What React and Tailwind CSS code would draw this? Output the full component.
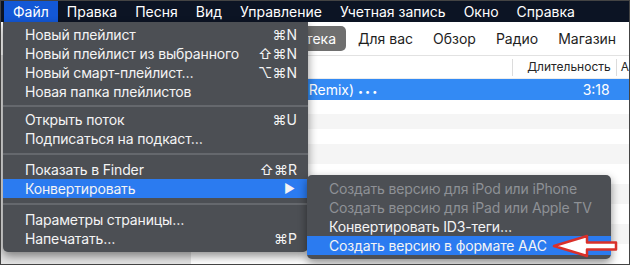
import React from 'react';

const menuBar = ['Файл', 'Правка', 'Песня', 'Вид', 'Управление', 'Учетная запись', 'Окно', 'Справка'];

const fileMenu = [
  { label: 'Новый плейлист', keys: '⌘N' },
  { label: 'Новый плейлист из выбранного', keys: '⇧⌘N' },
  { label: 'Новый смарт-плейлист…', keys: '⌥⌘N' },
  { label: 'Новая папка плейлистов' },
  { sep: 'h-[9px]' },
  { label: 'Открыть поток', keys: '⌘U' },
  { label: 'Подписаться на подкаст…' },
  { sep: 'h-[12px]' },
  { label: 'Показать в Finder', keys: '⇧⌘R' },
  { label: 'Конвертировать', arrow: true, active: true },
  { sep: 'h-[12px]' },
  { label: 'Параметры страницы…' },
  { label: 'Напечатать…', keys: '⌘P' },
];

const convertMenu = [
  { label: 'Создать версию для iPod или iPhone', disabled: true },
  { label: 'Создать версию для iPad или Apple TV', disabled: true },
  { label: 'Конвертировать ID3-теги…' },
  { label: 'Создать версию в формате AAC', active: true },
];

const MenuRow = ({ item }) => {
  if (item.sep) {
    return (
      <div className={`${item.sep} flex items-center`}>
        <div className="h-[2px] w-full bg-[#65686d]" />
      </div>
    );
  }
  return (
    <div
      className={`h-[19px] flex items-center pl-[22px] pr-[11px] ${item.active ? 'bg-[#2b7bf0]' : ''} ${item.disabled ? 'text-[#8e9196]' : 'text-[#f4f4f4]'}`}
    >
      <span className="flex-1 whitespace-nowrap tracking-[-0.15px]">{item.label}</span>
      {item.keys && <span className="whitespace-nowrap">{item.keys}</span>}
      {item.arrow && <span className="text-[12px] pr-[2px]">▶</span>}
    </div>
  );
};

const App = () => {
  return (
    <div
      className="relative w-[630px] h-[265px] overflow-hidden border border-[#444] bg-white flex flex-col text-[14px] leading-none"
      style={{ fontFamily: 'Inter, "Liberation Sans", Arial, sans-serif' }}
    >
      {/* macOS menu bar */}
      <div className="h-[21px] bg-[#0c1424] flex items-stretch pl-[3px] text-white">
        {menuBar.map((m, i) => (
          <div key={m} className={`px-[9px] flex items-center ${i === 0 ? 'bg-[#1358d6]' : ''}`}>
            {m}
          </div>
        ))}
      </div>

      {/* iTunes window */}
      <div className="h-[34px] flex items-center border-b border-[#e2e2e2] pl-[245px] text-[#1e1e1e]">
        <div className="w-[100px] h-[25px] rounded-[5px] bg-[#6f6f6f] text-white flex items-center justify-end pr-[10px]">
          Библиотека
        </div>
        <div className="flex gap-[20px] ml-[12px]">
          <span>Для вас</span>
          <span>Обзор</span>
          <span>Радио</span>
          <span>Магазин</span>
        </div>
      </div>

      <div className="flex-1 flex">
        <div className="w-[192px] bg-[#e4e4e4]" />
        <div className="flex-1 flex flex-col">
          <div className="h-[23px] flex items-center border-b border-[#ececec] text-[12px] text-[#262626]">
            <div className="w-[322px] h-[17px] border-r border-[#dcdcdc]" />
            <div className="w-[104px] h-[17px] border-r border-[#dcdcdc] flex items-center justify-end pr-[5px]">
              Длительность
            </div>
            <div className="pl-[4px]">А</div>
          </div>
          <div className="h-[21px] bg-[#338af4] text-white flex items-center">
            <div className="w-[322px] pl-[118px] whitespace-nowrap">
              Remix) <span className="text-[9px] tracking-[2px]">•••</span>
            </div>
            <div className="w-[104px] text-right pr-[7px]">3:18</div>
          </div>
          <div className="h-[14px] bg-white" />
          <div className="h-[15px] bg-[#f5f5f5]" />
          <div className="h-[15px] bg-white" />
          <div className="h-[20px] bg-[#f5f5f5]" />
          <div className="h-[20px] bg-white" />
          <div className="h-[20px] bg-[#f5f5f5]" />
          <div className="h-[20px] bg-white" />
          <div className="h-[20px] bg-[#f5f5f5]" />
          <div className="h-[20px] bg-white" />
        </div>
      </div>

      {/* File menu */}
      <div className="absolute left-[2px] top-[21px] w-[305px] pt-[3px] pb-[4px] bg-[#4c4f54] rounded-b-[5px] shadow-[0_4px_10px_rgba(0,0,0,0.45)]">
        {fileMenu.map((item, i) => (
          <MenuRow key={i} item={item} />
        ))}
      </div>

      {/* Convert submenu */}
      <div className="absolute left-[306px] top-[174px] w-[304px] py-[4px] bg-[#4c4f54] rounded-[5px] shadow-[0_4px_10px_rgba(0,0,0,0.45)]">
        {convertMenu.map((item, i) => (
          <MenuRow key={i} item={item} />
        ))}
      </div>

      {/* red pointer arrow */}
      <svg className="absolute left-[549px] top-[232px]" width="70" height="26" viewBox="0 0 70 26">
        <path
          d="M4 13 L37 3 L37 9.5 L66 9.5 L66 16.5 L37 16.5 L37 23 Z"
          fill="#ffffff"
          stroke="#d9302a"
          strokeWidth="2.5"
          strokeLinejoin="round"
        />
      </svg>
    </div>
  );
};

export default App;
